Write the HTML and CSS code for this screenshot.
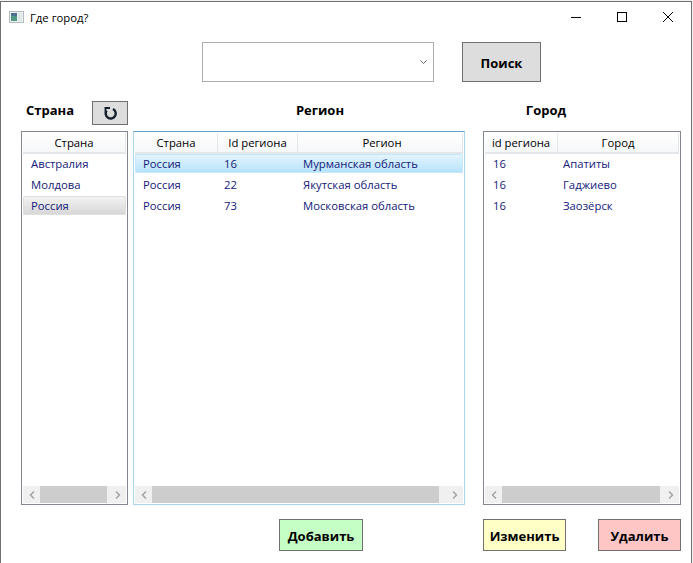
FILE: index.html
```html
<!DOCTYPE html>
<html>
<head>
    <title>Где город?</title>
    <meta charset="UTF-8">
    <link rel="stylesheet" href="styles.css">
</head>
<body>
    <div class="window">
        <div class="titlebar">
            <svg class="app-icon" width="15" height="12" viewBox="0 0 15 12">
                <rect x="0.5" y="0.5" width="14" height="11" fill="#eef2f3" stroke="#b4bcbe"/>
                <rect x="2" y="2" width="6" height="8" fill="#4f9a80"/>
                <rect x="2" y="2" width="6" height="3" fill="#50708f"/>
                <rect x="9" y="2" width="4" height="8" fill="#dfe8e8"/>
            </svg>
            <span class="title">Где город?</span>
            <div class="win-buttons">
                <svg width="46" height="30" viewBox="0 0 46 30"><path d="M18 15.5h10" stroke="#000" fill="none"/></svg>
                <svg width="46" height="30" viewBox="0 0 46 30"><rect x="18.5" y="10.5" width="9" height="9" stroke="#000" fill="none"/></svg>
                <svg width="46" height="30" viewBox="0 0 46 30"><path d="M18 10l10 10M28 10l-10 10" stroke="#000" fill="none"/></svg>
            </div>
        </div>

        <div class="search-row">
            <div class="combo">
                <svg width="7" height="4" viewBox="0 0 7 4"><path d="M0.5 0.5l3 3 3-3" stroke="#666" fill="none"/></svg>
            </div>
            <button class="btn btn-search">Поиск</button>
        </div>

        <div class="panels">
            <div class="col col-country">
                <div class="col-head">
                    <span class="col-label">Страна</span>
                    <button class="btn btn-reset">
                        <svg width="15" height="13" viewBox="0 0 15 13"><path d="M3.6 3.6A5 5 0 1 0 10 2" stroke="#17202e" stroke-width="2.4" fill="none"/><path d="M1.5 1H7M2.5 1V5.5" stroke="#17202e" stroke-width="1.8" fill="none"/></svg>
                    </button>
                </div>
                <div class="list">
                    <div class="list-header">
                        <div class="th th-full">Страна</div>
                    </div>
                    <div class="rows">
                        <div class="row"><span class="td">Австралия</span></div>
                        <div class="row"><span class="td">Молдова</span></div>
                        <div class="row row-gray"><span class="td">Россия</span></div>
                    </div>
                    <div class="scrollbar">
                        <span class="arrow"><svg width="6" height="8" viewBox="0 0 6 8"><path d="M5 0.5L1.5 4 5 7.5" stroke="#a0a0a0" stroke-width="1.4" fill="none"/></svg></span>
                        <span class="thumb"></span>
                        <span class="arrow"><svg width="6" height="8" viewBox="0 0 6 8"><path d="M1 0.5L4.5 4 1 7.5" stroke="#a0a0a0" stroke-width="1.4" fill="none"/></svg></span>
                    </div>
                </div>
            </div>

            <div class="col col-region">
                <div class="col-head col-head-center"><span class="col-label">Регион</span></div>
                <div class="list list-focus">
                    <div class="list-header">
                        <div class="th th-country">Страна</div>
                        <div class="th th-id">Id региона</div>
                        <div class="th th-full">Регион</div>
                    </div>
                    <div class="rows">
                        <div class="row row-blue"><span class="td td-country">Россия</span><span class="td td-id">16</span><span class="td">Мурманская область</span></div>
                        <div class="row"><span class="td td-country">Россия</span><span class="td td-id">22</span><span class="td">Якутская область</span></div>
                        <div class="row"><span class="td td-country">Россия</span><span class="td td-id">73</span><span class="td">Московская область</span></div>
                    </div>
                    <div class="scrollbar">
                        <span class="arrow"><svg width="6" height="8" viewBox="0 0 6 8"><path d="M5 0.5L1.5 4 5 7.5" stroke="#a0a0a0" stroke-width="1.4" fill="none"/></svg></span>
                        <span class="thumb"></span>
                        <span class="arrow"><svg width="6" height="8" viewBox="0 0 6 8"><path d="M1 0.5L4.5 4 1 7.5" stroke="#a0a0a0" stroke-width="1.4" fill="none"/></svg></span>
                    </div>
                </div>
            </div>

            <div class="col col-city">
                <div class="col-head col-head-center"><span class="col-label">Город</span></div>
                <div class="list">
                    <div class="list-header">
                        <div class="th th-cid">id региона</div>
                        <div class="th th-full">Город</div>
                    </div>
                    <div class="rows">
                        <div class="row"><span class="td td-cid">16</span><span class="td">Апатиты</span></div>
                        <div class="row"><span class="td td-cid">16</span><span class="td">Гаджиево</span></div>
                        <div class="row"><span class="td td-cid">16</span><span class="td">Заозёрск</span></div>
                    </div>
                    <div class="scrollbar">
                        <span class="arrow"><svg width="6" height="8" viewBox="0 0 6 8"><path d="M5 0.5L1.5 4 5 7.5" stroke="#a0a0a0" stroke-width="1.4" fill="none"/></svg></span>
                        <span class="thumb"></span>
                        <span class="arrow"><svg width="6" height="8" viewBox="0 0 6 8"><path d="M1 0.5L4.5 4 1 7.5" stroke="#a0a0a0" stroke-width="1.4" fill="none"/></svg></span>
                    </div>
                </div>
            </div>
        </div>

        <div class="actions">
            <button class="btn btn-add">Добавить</button>
            <button class="btn btn-edit">Изменить</button>
            <button class="btn btn-delete">Удалить</button>
        </div>
    </div>
</body>
</html>
```

FILE: styles.css
```css
html, body {
    margin: 0;
    padding: 0;
    background: #f2f2f2;
}
body {
    width: 693px;
    height: 563px;
    overflow: hidden;
    font-family: "Open Sans", "Noto Sans", sans-serif;
    font-size: 11.3px;
    color: #000;
}
.window {
    box-sizing: border-box;
    width: 692px;
    height: 562px;
    margin-top: 1px;
    background: #fff;
    border-left: 1px solid #707070;
    border-right: 1px solid #707070;
    border-top: 1px solid #707070;
}
.titlebar {
    display: flex;
    align-items: center;
    height: 30px;
    padding-left: 8px;
}
.app-icon {
    margin-right: 6px;
}
.win-buttons {
    display: flex;
    margin-left: auto;
}
.search-row {
    display: flex;
    margin: 10px 0 0 201px;
    gap: 28px;
}
.combo {
    box-sizing: border-box;
    width: 232px;
    height: 40px;
    border: 1px solid #acacac;
    display: flex;
    align-items: center;
    justify-content: flex-end;
    padding-right: 6px;
}
.btn {
    box-sizing: border-box;
    padding: 1px 0 0;
    border: 1px solid #707070;
    background: #ddd;
    font-family: inherit;
    font-weight: 700;
    font-size: 13px;
    color: #000;
}
.btn-search {
    width: 79px;
    height: 40px;
}
.panels {
    display: flex;
    margin: 19px 0 0 20px;
}
.col-head {
    display: flex;
    align-items: center;
    height: 24px;
    margin-bottom: 6px;
}
.col-head-center {
    justify-content: center;
}
.col-label {
    font-size: 13px;
    font-weight: 700;
    padding-bottom: 6px;
}
.col-country {
    width: 107px;
    margin-right: 5px;
}
.col-country .col-label {
    margin-left: 5px;
    margin-right: 18px;
}
.col-region {
    width: 332px;
    margin-right: 18px;
}
.col-region .col-head {
    padding-left: 42px;
}
.col-city {
    width: 198px;
}
.col-city .col-head {
    padding-right: 72px;
}
.btn-reset {
    width: 36px;
    height: 24px;
    padding: 0;
    display: flex;
    align-items: center;
    justify-content: center;
}
.list {
    box-sizing: border-box;
    height: 374px;
    border: 1px solid #828790;
    display: flex;
    flex-direction: column;
    padding: 1px;
}
.list-focus {
    border-color: #abd5ea;
    border-top-color: #5e9fc7;
}
.list-header {
    display: flex;
    height: 19px;
    border-bottom: 2px solid #e4e7ea;
    background: linear-gradient(#fff, #f5f7f8);
    flex: none;
}
.th {
    box-sizing: border-box;
    text-align: center;
    line-height: 20px;
    border-right: 1px solid #e4e7ea;
}
.th-full {
    flex: 1;
}
.list-focus .th-full {
    padding-left: 4px;
}
.th-country {
    width: 83px;
}
.th-id {
    width: 80px;
}
.th-cid {
    width: 73px;
}
.rows {
    flex: 1;
}
.row {
    display: flex;
    box-sizing: border-box;
    height: 19px;
    line-height: 19px;
    margin-bottom: 2px;
    color: #14207a;
    border-radius: 2px;
}
.td {
    padding-left: 8px;
    box-sizing: border-box;
}
.td-country {
    width: 81px;
}
.td-id {
    width: 79px;
}
.td-cid {
    width: 70px;
}
.row-blue {
    background: linear-gradient(#e6f5fe, #b4e2fb);
    box-shadow: inset 0 0 0 1px #c4e8fc;
}
.row-gray {
    background: linear-gradient(#f4f4f4, #d6d6d6);
    box-shadow: inset 0 0 0 1px #e0e0e0;
}
.scrollbar {
    display: flex;
    flex: none;
    height: 17px;
    background: #f0f0f0;
}
.arrow {
    width: 17px;
    display: flex;
    align-items: center;
    justify-content: center;
    flex: none;
}
.thumb {
    flex: 1;
    margin-right: 2px;
    background: #cdcdcd;
}
.list-focus .thumb {
    margin-right: 7px;
}
.actions {
    display: flex;
    margin: 14px 0 0 278px;
}
.actions .btn {
    height: 32px;
}
.btn-add {
    width: 84px;
    margin-right: 120px;
    background: #c6ffc6;
}
.btn-edit {
    width: 83px;
    margin-right: 32px;
    background: #ffffc6;
}
.btn-delete {
    width: 83px;
    background: #ffc6c6;
}
```
